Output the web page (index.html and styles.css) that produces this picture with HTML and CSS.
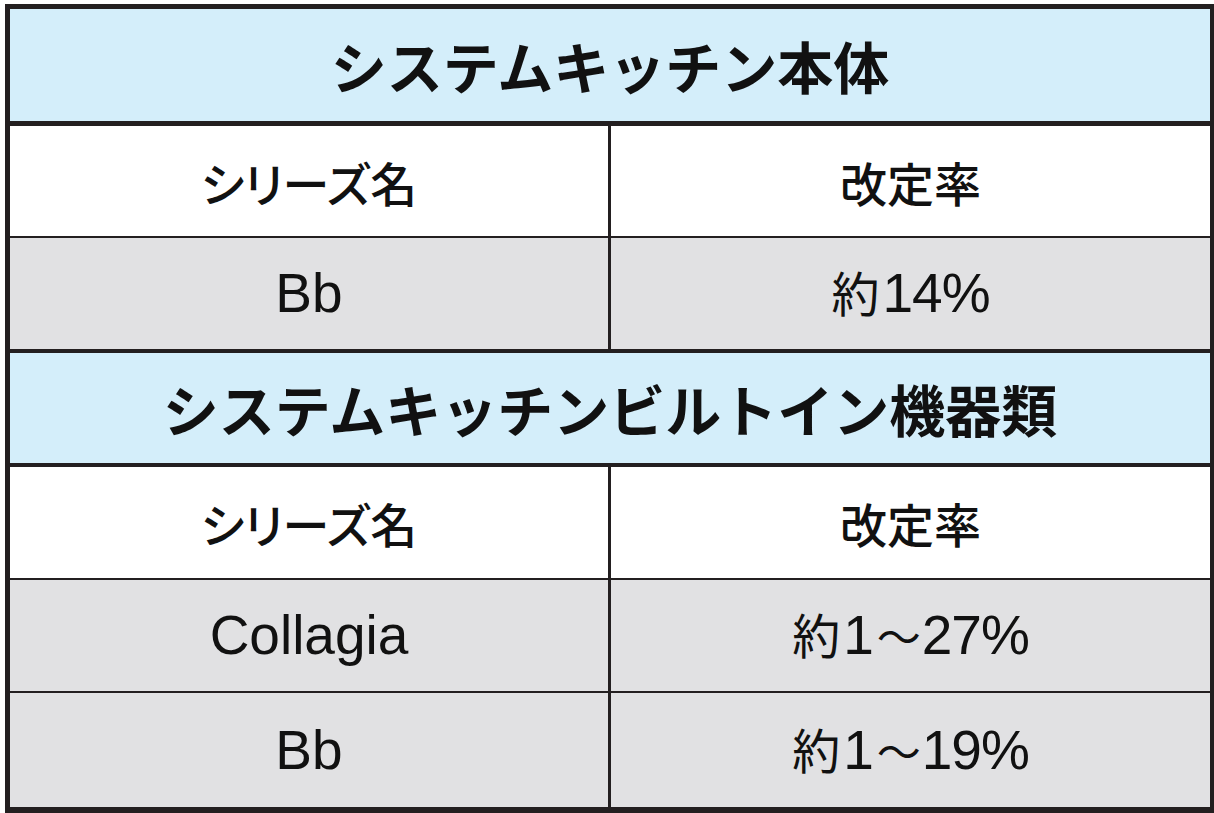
FILE: index.html
```html
<!DOCTYPE html>
<html lang="ja">
<head>
<meta charset="utf-8">
<title>改定率</title>
<link rel="stylesheet" href="styles.css">
</head>
<body>
<div class="sheet">
  <div class="head h1">システムキッチン本体</div>
  <div class="row label r1"><div class="cell">シリーズ名</div><div class="cell">改定率</div></div>
  <div class="row data r2"><div class="cell"><span class="val">Bb</span></div><div class="cell"><span class="val num"><span class="jp">約</span>14%</span></div></div>
  <div class="head h2">システムキッチンビルトイン機器類</div>
  <div class="row label r3"><div class="cell">シリーズ名</div><div class="cell">改定率</div></div>
  <div class="row data r4"><div class="cell"><span class="val">Collagia</span></div><div class="cell"><span class="val num"><span class="jp">約</span>1<span class="jp tilde">～</span>27%</span></div></div>
  <div class="row data r5"><div class="cell"><span class="val">Bb</span></div><div class="cell"><span class="val num"><span class="jp">約</span>1<span class="jp tilde">～</span>19%</span></div></div>
</div>
</body>
</html>
```
FILE: styles.css
```css
html, body {
  margin: 0;
  padding: 0;
  background: #ffffff;
  overflow: hidden;
}
body {
  padding: 4px 0 0 5px;
}
.sheet {
  box-sizing: border-box;
  width: 1209px;
  height: 809px;
  border-style: solid;
  border-color: #231f20;
  border-width: 5px 4px 6px 5px;
  display: flex;
  flex-direction: column;
  font-family: "Noto Sans CJK JP", sans-serif;
  color: #111111;
}
.head {
  background: #d4eefa;
  display: flex;
  align-items: center;
  justify-content: center;
  font-weight: 700;
  font-size: 56px;
  line-height: 1;
}
.h1 { height: 112px; }
.h2 { height: 110px; border-top: 4px solid #231f20; }
.row {
  display: grid;
  grid-template-columns: 601px 1fr;
}
.row .cell {
  display: flex;
  align-items: center;
  justify-content: center;
  line-height: 1;
}
.row .cell:first-child {
  border-right: 3px solid #231f20;
}
.label { background: #ffffff; }
.label .cell {
  font-size: 47px;
  font-weight: 500;
}
.label .cell:first-child { font-feature-settings: "palt"; }
.data { background: #e1e1e3; }
.data .val {
  font-family: "Liberation Sans", "Noto Sans CJK JP", sans-serif;
  font-size: 55px;
  font-weight: 400;
  line-height: 1;
}
.data .num { letter-spacing: -1px; }
.data .jp {
  font-family: "Noto Sans CJK JP", sans-serif;
  font-size: 48px;
  margin-right: 4px;
}
.data .tilde {
  font-size: 44px;
  margin: 0 2px 0 4px;
}
.r1 { height: 110px; border-top: 5px solid #231f20; }
.r2 { height: 111px; border-top: 2px solid #231f20; }
.r3 { height: 111px; border-top: 4px solid #231f20; }
.r4 { height: 111px; border-top: 2px solid #231f20; }
.r5 { height: 114px; border-top: 2px solid #231f20; }
```
